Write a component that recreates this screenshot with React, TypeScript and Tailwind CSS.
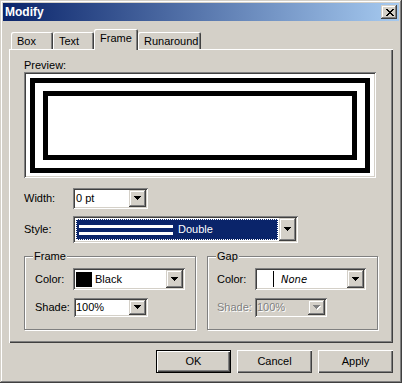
import type { ReactNode } from "react";

const sunken =
  "shadow-[inset_1px_1px_#808080,inset_-1px_-1px_#ffffff,inset_2px_2px_#404040,inset_-2px_-2px_#d4d0c8]";
const raised =
  "shadow-[inset_-1px_-1px_#404040,inset_1px_1px_#d4d0c8,inset_-2px_-2px_#808080,inset_2px_2px_#ffffff]";

const CLOSE_GLYPH = ["11000011", "01100110", "00111100", "00011000", "00111100", "01100110", "11000011"];

const CloseGlyph = () => (
  <svg width="8" height="7" viewBox="0 0 8 7" shapeRendering="crispEdges">
    {CLOSE_GLYPH.map((row, y) =>
      row.split("").map((c, x) => (c === "1" ? <rect key={`${x}-${y}`} x={x} y={y} width="1" height="1" fill="#000" /> : null))
    )}
  </svg>
);

const Arrow = ({ disabled }: { disabled?: boolean }) => (
  <svg width="8" height="5" viewBox="0 0 8 5" shapeRendering="crispEdges">
    {disabled && (
      <g fill="#ffffff">
        <rect x="1" y="1" width="7" height="1" />
        <rect x="2" y="2" width="5" height="1" />
        <rect x="3" y="3" width="3" height="1" />
        <rect x="4" y="4" width="1" height="1" />
      </g>
    )}
    <g fill={disabled ? "#808080" : "#000000"}>
      <rect x="0" y="0" width="7" height="1" />
      <rect x="1" y="1" width="5" height="1" />
      <rect x="2" y="2" width="3" height="1" />
      <rect x="3" y="3" width="1" height="1" />
    </g>
  </svg>
);

const Combo = ({ className, disabled, children }: { className: string; disabled?: boolean; children: ReactNode }) => (
  <div className={`flex p-[2px] ${sunken} ${disabled ? "bg-[#d4d0c8]" : "bg-white"} ${className}`}>
    <div className="flex min-w-0 flex-1 items-center">{children}</div>
    <div className={`flex w-[17px] shrink-0 items-center justify-center bg-[#d4d0c8] pl-[1px] ${raised}`}>
      <Arrow disabled={disabled} />
    </div>
  </div>
);

const Tab = ({ label, active, className }: { label: string; active?: boolean; className: string }) => (
  <div
    className={`rounded-t-[2px] bg-[#d4d0c8] pl-[6px] pt-[3px] shadow-[inset_1px_1px_#ffffff,inset_-1px_0_#404040,inset_-2px_0_#808080] ${
      active ? "relative z-10 -mb-[1px] h-[21px]" : "h-[17px]"
    } ${className}`}
  >
    {label}
  </div>
);

const Group = ({ title, className, legendPos, children }: { title: string; className: string; legendPos: string; children: ReactNode }) => (
  <div className={`relative h-[74px] border border-[#808080] shadow-[inset_1px_1px_#ffffff,1px_1px_#ffffff] pt-[11px] ${className}`}>
    <div className={`absolute top-[-7px] bg-[#d4d0c8] px-[1px] ${legendPos}`}>{title}</div>
    {children}
  </div>
);

const PushButton = ({ label, isDefault }: { label: string; isDefault?: boolean }) => (
  <div
    className={`flex h-[23px] w-[75px] items-center justify-center ${
      isDefault
        ? "border border-black shadow-[inset_1px_1px_#ffffff,inset_-1px_-1px_#404040,inset_-2px_-2px_#808080]"
        : "shadow-[inset_1px_1px_#ffffff,inset_-1px_-1px_#404040,inset_-2px_-2px_#808080]"
    }`}
  >
    {label}
  </div>
);

export default function App() {
  return (
    <div className="h-[383px] w-[402px] bg-[#d4d0c8] p-[3px] text-[11px] leading-[13px] text-black [font-family:'Liberation_Sans',Arial,sans-serif] shadow-[inset_-1px_-1px_#404040,inset_1px_1px_#d4d0c8,inset_-2px_-2px_#808080,inset_2px_2px_#ffffff]">
      {/* title bar */}
      <div className="flex h-[18px] items-center bg-[linear-gradient(90deg,#0a246a,#a6caf0)] pl-[2px] pr-[2px]">
        <span className="text-[12px] font-bold leading-[18px] text-white">Modify</span>
        <div className={`ml-auto flex h-[14px] w-[16px] items-center justify-center bg-[#d4d0c8] pl-[1px] ${raised}`}>
          <CloseGlyph />
        </div>
      </div>

      {/* tabs */}
      <div className="ml-[8px] mt-[8px] flex h-[20px] items-end">
        <Tab label="Box" className="w-[42px]" />
        <Tab label="Text" className="w-[41px]" />
        <Tab label="Frame" active className="w-[44px]" />
        <Tab label="Runaround" className="w-[63px]" />
      </div>

      {/* panel */}
      <div className="mx-[6px] h-[294px] pl-[15px] pt-[10px] shadow-[inset_1px_1px_#ffffff,inset_-1px_-1px_#404040,inset_-2px_-2px_#808080]">
        <div>Preview:</div>
        <div className={`h-[106px] w-[352px] bg-white p-[6px] ${sunken}`}>
          <div className="h-[95px] w-[340px] border-[5px] border-black p-[8px]">
            <div className="h-full w-full border-[5px] border-black" />
          </div>
        </div>

        <div className="mt-[10px] flex items-center">
          <div className="w-[49px]">Width:</div>
          <Combo className="h-[21px] w-[75px]">
            <span className="pl-[1px]">0 pt</span>
          </Combo>
        </div>

        <div className="mt-[7px] flex items-center">
          <div className="w-[49px]">Style:</div>
          <Combo className="h-[27px] w-[225px]">
            <div className="mx-[1px] my-[1px] flex h-[21px] flex-1 items-center bg-[#0a246a] outline-1 outline-dotted outline-offset-[-1px] outline-[#ffffff] pr-[1px]">
              <div className="ml-[3px] flex w-[94px] flex-col gap-[4px]">
                <div className="h-[3px] bg-white" />
                <div className="h-[3px] bg-white" />
              </div>
              <span className="ml-[5px] text-white">Double</span>
            </div>
          </Combo>
        </div>

        <div className="mt-[13px] flex gap-[11px]">
          <Group title="Frame" className="w-[172px] pl-[10px]" legendPos="left-[8px]">
            <div className="flex items-center">
              <div className="w-[38px]">Color:</div>
              <Combo className="h-[22px] w-[112px]">
                <div className="ml-[1px] h-[15px] w-[16px] bg-black" />
                <span className="ml-[3px]">Black</span>
              </Combo>
            </div>
            <div className="mt-[8px] flex items-center">
              <div className="w-[39px]">Shade:</div>
              <Combo className="h-[19px] w-[74px]">
                <span>100%</span>
              </Combo>
            </div>
          </Group>

          <Group title="Gap" className="w-[171px] pl-[9px]" legendPos="left-[8px]">
            <div className="flex items-center">
              <div className="w-[38px]">Color:</div>
              <Combo className="h-[22px] w-[111px]">
                <div className="h-[16px] w-[17px] border-r border-black" />
                <span className="ml-[7px] italic [font-family:'DejaVu_Sans',sans-serif] text-[10px]">None</span>
              </Combo>
            </div>
            <div className="mt-[8px] flex items-center">
              <div className="w-[38px] text-[#808080] [text-shadow:1px_1px_#ffffff]">Shade:</div>
              <Combo disabled className="h-[19px] w-[72px]">
                <span className="text-[#808080] [text-shadow:1px_1px_#ffffff]">100%</span>
              </Combo>
            </div>
          </Group>
        </div>
      </div>

      {/* buttons */}
      <div className="mr-[6px] mt-[7px] flex justify-end gap-[6px]">
        <PushButton label="OK" isDefault />
        <PushButton label="Cancel" />
        <PushButton label="Apply" />
      </div>
    </div>
  );
}
